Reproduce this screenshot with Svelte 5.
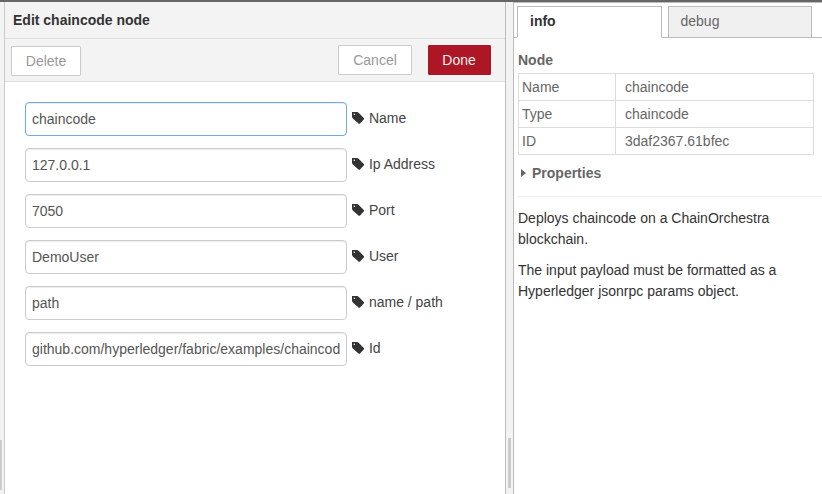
<script>
  const fields = [
    { label: 'Name', value: 'chaincode', focused: true },
    { label: 'Ip Address', value: '127.0.0.1' },
    { label: 'Port', value: '7050' },
    { label: 'User', value: 'DemoUser' },
    { label: 'name / path', value: 'path' },
    { label: 'Id', value: 'github.com/hyperledger/fabric/examples/chaincod' }
  ];
  const info = [
    ['Name', 'chaincode'],
    ['Type', 'chaincode'],
    ['ID', '3daf2367.61bfec']
  ];
</script>

<div class="app">
  <div class="edge"><span class="grip"></span></div>
  <section class="editor">
    <header>Edit chaincode node</header>
    <div class="toolbar">
      <button class="delete">Delete</button>
      <button class="cancel">Cancel</button>
      <button class="done">Done</button>
    </div>
    <form>
      {#each fields as f}
        <div class="row">
          <div class="input" class:focused={f.focused}><span>{f.value}</span></div>
          <div class="label">
            <svg width="12" height="12" viewBox="0 0 12 12"><path d="M0 0H5.2L6.6.8 12 6.2V7.3L7.8 11.8H6.8L.8 6.4 0 5zM2.3 1.6a.75.75 0 1 0 0 1.5.75.75 0 0 0 0-1.5z" fill="#333" fill-rule="evenodd" /></svg>
            <span>{f.label}</span>
          </div>
        </div>
      {/each}
    </form>
  </section>
  <div class="gutter"><span class="grip"></span></div>
  <aside>
    <nav>
      <div class="tab active">info</div>
      <div class="tab">debug</div>
    </nav>
    <div class="content">
      <h4>Node</h4>
      <table>
        <tbody>
          {#each info as [k, v]}
            <tr><td class="key">{k}</td><td class="val">{v}</td></tr>
          {/each}
        </tbody>
      </table>
      <div class="props">
        <svg width="5" height="8" viewBox="0 0 5 8"><path d="M0 0L5 4L0 8z" fill="#666" /></svg>
        <span>Properties</span>
      </div>
      <div class="help">
        <p>Deploys chaincode on a ChainOrchestra blockchain.</p>
        <p>The input payload must be formatted as a Hyperledger jsonrpc params object.</p>
      </div>
    </div>
  </aside>
</div>

<style>
  .app {
    box-sizing: border-box;
    width: 822px;
    height: 494px;
    display: flex;
    overflow: hidden;
    border-top: 2px solid #666;
    background: #fff;
    color: #333;
    font: 14px/20px "Liberation Sans", Arial, sans-serif;
  }
  .app * { box-sizing: border-box; }
  .edge {
    width: 5px;
    flex: none;
    background: #f3f3f3;
    border-right: 1px solid #ccc;
  }
  .grip { display: block; background: #ccc; height: 50px; }
  .edge .grip { width: 2px; margin-top: 438px; }
  .editor { width: 500px; flex: none; }
  header {
    height: 37px;
    padding: 8px 8px 0;
    background: #f3f3f3;
    border-bottom: 1px solid #ddd;
    font-weight: bold;
  }
  .toolbar {
    height: 43px;
    padding: 6px 14px 0 6px;
    display: flex;
    background: #f3f3f3;
    border-bottom: 1px solid #ddd;
  }
  button {
    height: 30px;
    padding: 0;
    border: 1px solid #ccc;
    border-radius: 1px;
    background: #fff;
    color: #999;
    font: inherit;
  }
  .delete { width: 70px; margin-top: 1px; }
  .cancel { width: 74px; margin-left: auto; }
  .done {
    width: 63px;
    margin-left: 16px;
    padding-right: 1px;
    background: #ad1625;
    border-color: #ad1625;
    color: #eee;
  }
  form { padding: 20px 0 0 20px; }
  .row { display: flex; height: 34px; margin-bottom: 12px; }
  .input {
    width: 322px;
    padding: 6px;
    border: 1px solid #ccc;
    border-radius: 4px;
    box-shadow: inset 0 1px 1px rgba(0, 0, 0, 0.075);
    color: #555;
  }
  .input span { display: block; white-space: nowrap; }
  .input.focused { border-color: #71a8e8; }
  .label { display: flex; padding: 6px 0 0 5px; color: #444; }
  .label svg { margin: 4px 4.9px 0 0; }
  .gutter {
    width: 9px;
    flex: none;
    background: #f3f3f3;
    border: 1px solid #bbb;
    border-width: 0 1px;
  }
  .gutter .grip { width: 3px; margin: 436px 0 0 2px; }
  aside { flex: 1; border-top: 1px solid #bbb; color: #666; }
  nav {
    height: 35px;
    padding: 3px 0 0 3px;
    display: flex;
    gap: 6px;
    box-shadow: inset 0 -1px #bbb;
  }
  .tab {
    width: 145px;
    height: 32px;
    padding: 4px 12px;
    border: 1px solid #bbb;
    background: #f0f0f0;
  }
  .tab + .tab { width: 144px; padding-left: 11.5px; }
  .tab.active {
    border-bottom-color: #fff;
    background: #fff;
    color: #333;
    font-weight: bold;
  }
  .content { padding: 12px 0 0 4px; }
  h4 { margin: 0 0 3px; font: bold 14px/20px "Liberation Sans", Arial, sans-serif; }
  table { width: 296px; border-collapse: collapse; table-layout: fixed; }
  td { height: 27px; border: 1px solid #ddd; padding: 0 3px; }
  .key { width: 97px; }
  .val { padding-left: 9px; }
  .props {
    display: flex;
    align-items: center;
    height: 20px;
    margin-top: 8px;
    padding-left: 2.5px;
    gap: 6.5px;
    font-weight: bold;
  }
  .help {
    margin-top: 13px;
    padding-top: 11px;
    border-top: 1px solid #eee;
    color: #333;
    line-height: 21px;
  }
  p { width: 285px; margin: 0 0 10px; }
</style>
